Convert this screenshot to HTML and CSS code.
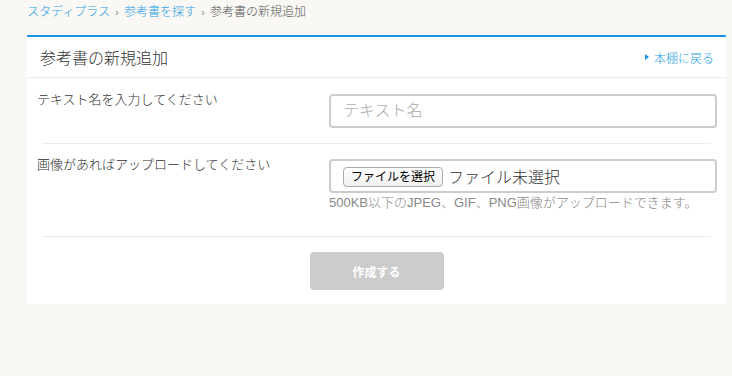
FILE: index.html
```html
<!DOCTYPE html>
<html lang="ja">
<head>
    <meta charset="UTF-8"/>
    <meta name="viewport" content="width=device-width, initial-scale=1.0"/>
    <title>参考書の新規追加</title>

    <link rel="stylesheet" href="styles.css">
</head>
<body>

<nav class="breadcrumb">
    <a href="#">スタディプラス</a>
    <span class="crumb-sep">›</span>
    <a href="#">参考書を探す</a>
    <span class="crumb-sep">›</span>
    <span class="crumb-current">参考書の新規追加</span>
</nav>

<main class="panel">
    <header class="panel-header">
        <h1>参考書の新規追加</h1>
        <a href="#" class="back-link"><span class="arrow"></span>本棚に戻る</a>
    </header>

    <form>
        <div class="form-row">
            <label for="title" class="row-label">テキスト名を入力してください</label>
            <div class="row-field">
                <input type="text" id="title" class="text-input" placeholder="テキスト名"/>
            </div>
        </div>

        <div class="divider"></div>

        <div class="form-row form-row-file">
            <span class="row-label">画像があればアップロードしてください</span>
            <div class="row-field">
                <label class="file-field">
                    <span class="file-btn">ファイルを選択</span>
                    <span class="file-name">ファイル未選択</span>
                    <input type="file" id="image" hidden/>
                </label>
                <p class="help-text">500KB以下のJPEG、GIF、PNG画像がアップロードできます。</p>
            </div>
        </div>

        <div class="divider"></div>

        <div class="form-actions">
            <button type="submit" class="submit-btn" disabled>作成する</button>
        </div>
    </form>
</main>

</body>
</html>
```

FILE: styles.css
```css
:root {
    --bg-color: #f9f8f4;
    --blue: #1a93e6;
    --link-color: #2a9fe4;
    --line-color: #efede3;
    --text-color: #333;
}

* {
    margin: 0;
    padding: 0;
    box-sizing: border-box;
}

body {
    font-family: "Liberation Sans", "Noto Sans CJK JP", sans-serif;
    font-weight: 300;
    color: var(--text-color);
    background-color: var(--bg-color);
}

a {
    color: var(--link-color);
    text-decoration: none;
}

.breadcrumb {
    padding: 3px 27px 0;
    margin-bottom: 14px;
    font-size: 12px;
    line-height: 18px;
    height: 21px;
}

.crumb-sep {
    color: #777;
    font-size: 10px;
    margin: 0 2px;
}

.crumb-current {
    color: #555;
}

.panel {
    width: 699px;
    margin-left: 27px;
    background-color: white;
    border-top: 2px solid var(--blue);
    border-radius: 0 0 4px 4px;
}

.panel-header {
    height: 41px;
    padding: 0 12px 0 13px;
    border-bottom: 1px solid var(--line-color);
    display: flex;
    justify-content: space-between;
    align-items: center;
}

.panel-header h1 {
    font-size: 16px;
    font-weight: 300;
    color: #333;
}

.back-link {
    font-size: 12px;
    display: flex;
    align-items: center;
}

.arrow {
    width: 0;
    height: 0;
    border-left: 4px solid var(--blue);
    border-top: 3px solid transparent;
    border-bottom: 3px solid transparent;
    margin-right: 5px;
}

.form-row {
    display: flex;
    padding: 16px 9px 15px 10px;
}

.form-row-file {
    padding-top: 15px;
    padding-bottom: 24px;
}

.row-label {
    width: 292px;
    font-size: 13px;
    line-height: 12px;
    color: #333;
}

.row-field {
    width: 388px;
}

.text-input {
    width: 100%;
    height: 34px;
    padding: 0 12px;
    border: 2px solid #ccc;
    border-radius: 4px;
    font-family: inherit;
    font-weight: 300;
    font-size: 16px;
    color: #333;
}

.text-input::placeholder {
    color: #aaa;
}

.file-field {
    display: flex;
    align-items: center;
    gap: 5px;
    height: 34px;
    padding: 0 12px;
    border: 2px solid #ccc;
    border-radius: 4px;
    cursor: pointer;
}

.file-btn {
    height: 20px;
    width: 100px;
    margin-top: 2px;
    border: 1px solid #aaa;
    border-radius: 4px;
    background: linear-gradient(#fff, #f0f0f0);
    font-size: 12px;
    font-weight: normal;
    line-height: 18px;
    text-align: center;
    color: #000;
}

.file-name {
    font-size: 16px;
    color: #333;
}

.help-text {
    margin-top: 1px;
    font-size: 13px;
    line-height: 18px;
    color: #888;
}

.divider {
    height: 1px;
    margin: 0 15px;
    background-color: var(--line-color);
}

.form-actions {
    padding: 15px 0 14px;
}

.submit-btn {
    display: block;
    margin: 0 auto;
    width: 134px;
    height: 38px;
    border: none;
    border-radius: 4px;
    background-color: #ccc;
    color: white;
    font-family: inherit;
    font-size: 12px;
    font-weight: bold;
}
```
